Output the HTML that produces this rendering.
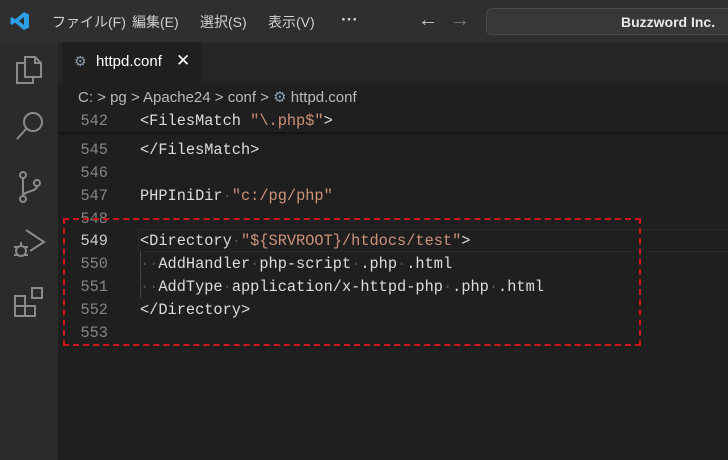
<!DOCTYPE html>
<html><head><meta charset="utf-8"><style>
*{margin:0;padding:0;box-sizing:border-box}
body{width:728px;height:460px;overflow:hidden;background:#1f1f1f;font-family:"Liberation Sans","Noto Sans CJK JP",sans-serif;position:relative}
.title{position:absolute;left:0;top:0;width:728px;height:42px;background:#2f2f2f;color:#d0d0d0;font-size:14px}
.title span{position:absolute;top:12px}
.search{position:absolute;left:486px;top:8px;width:250px;height:27px;border:1px solid #4a4a4a;border-radius:6px;background:#383838;color:#e8e8e8;font-size:14px;font-weight:bold;padding:5px 0 0 134px}
.act{position:absolute;left:0;top:42px;width:58px;height:418px;background:#2b2b2b}
.tabs{position:absolute;left:58px;top:42px;width:670px;height:41px;background:#252525}
.tab{position:absolute;left:62px;top:42px;width:139px;height:41px;background:#1f1f1f;color:#fff;font-size:15px}
.crumb{position:absolute;left:78px;top:88px;color:#bbb;font-size:15px}
.code{position:absolute;left:58px;top:111px;width:670px;font-family:"Liberation Mono",monospace;font-size:15.3px;color:#dcdcdc}
.ln{position:absolute;left:0;width:50px;text-align:right;color:#858585}
.tx{position:absolute;left:82px;white-space:pre}
.s{color:#ce9178}
.d{color:#555}
</style></head><body>
<div class="title">
<svg style="position:absolute;left:10px;top:11px" width="20" height="20" viewBox="0 0 20 20"><path d="M14 1 L19 3.5 V16.5 L14 19 L5 11.5 L2 14 L0.5 13 V7 L2 6 L5 8.5Z M14 6 L9 10 L14 14Z" fill="#2d9fe6" fill-rule="evenodd"/></svg>
<span style="left:52px">ファイル(F)</span><span style="left:132px">編集(E)</span><span style="left:200px">選択(S)</span><span style="left:268px">表示(V)</span><span style="left:341px;top:10px;font-size:17px;font-weight:bold">···</span>
<span style="left:418px;top:9px;font-size:20px;color:#ccc">←</span><span style="left:450px;top:9px;font-size:20px;color:#777">→</span>
<div class="search">Buzzword Inc.</div>
</div>
<div class="act">
<svg style="position:absolute;left:14px;top:12px" width="30" height="32" viewBox="0 0 30 32" fill="none" stroke="#8a8a8a" stroke-width="2"><path d="M11 3h10l6 6v14H11z M21 3v6h6 M11 9H3v20h16v-6"/></svg>
<svg style="position:absolute;left:14px;top:68px" width="32" height="32" viewBox="0 0 32 32" fill="none" stroke="#8a8a8a" stroke-width="2"><circle cx="19" cy="12" r="9"/><path d="M12 19L3 29"/></svg>
<svg style="position:absolute;left:15px;top:128px" width="30" height="34" viewBox="0 0 30 34" fill="none" stroke="#8a8a8a" stroke-width="2"><circle cx="8" cy="5" r="3"/><circle cx="8" cy="29" r="3"/><circle cx="22" cy="13" r="3"/><path d="M8 8v18M22 16c0 6-14 5-14 10"/></svg>
<svg style="position:absolute;left:12px;top:184px" width="34" height="34" viewBox="0 0 34 34" fill="none" stroke="#8a8a8a" stroke-width="2"><path d="M14 4l18 12-14 9"/><circle cx="9" cy="25" r="5"/><path d="M2 21h4M2 29h4M12 21h4M12 29h4M9 19v-3"/></svg>
<svg style="position:absolute;left:13px;top:244px" width="32" height="32" viewBox="0 0 32 32" fill="none" stroke="#8a8a8a" stroke-width="2"><path d="M2 10h10v10H2zM12 20h10v10H12zM2 20h10v10H2z"/><rect x="19" y="2" width="10" height="10"/></svg>
</div>
<div class="tabs"></div>
<div class="tab"><span style="position:absolute;left:12px;top:11px;color:#8aa0b5;font-size:14px">⚙</span><span style="position:absolute;left:34px;top:11px">httpd.conf</span><span style="position:absolute;left:114px;top:9px;font-size:17px">✕</span></div>
<div class="crumb">C: &gt; pg &gt; Apache24 &gt; conf &gt; <span style="color:#8aa0b5">⚙</span> httpd.conf</div>
<div style="position:absolute;left:58px;top:132px;width:670px;height:4px;background:linear-gradient(#111,#1f1f1f)"></div>
<div class="code">
<div class="ln" style="top:1px">542</div><div class="tx" style="top:1px">&lt;FilesMatch <span class="s">"\.php$"</span>&gt;</div>
<div class="ln" style="top:30px">545</div><div class="tx" style="top:30px">&lt;/FilesMatch&gt;</div>
<div class="ln" style="top:53px">546</div>
<div class="ln" style="top:76px">547</div><div class="tx" style="top:76px">PHPIniDir<span class="d">·</span><span class="s">"c:/pg/php"</span></div>
<div class="ln" style="top:99px">548</div>
<div style="position:absolute;left:80px;top:118px;width:600px;height:23px;border:1px solid #2a2a2a"></div>
<div class="ln" style="top:121px;color:#ccc">549</div><div class="tx" style="top:121px">&lt;Directory<span class="d">·</span><span class="s">"${SRVROOT}/htdocs/test"</span>&gt;</div>
<div style="position:absolute;left:82px;top:141px;width:1px;height:46px;background:#444"></div>
<div class="ln" style="top:144px">550</div><div class="tx" style="top:144px"><span class="d">··</span>AddHandler<span class="d">·</span>php-script<span class="d">·</span>.php<span class="d">·</span>.html</div>
<div class="ln" style="top:167px">551</div><div class="tx" style="top:167px"><span class="d">··</span>AddType<span class="d">·</span>application/x-httpd-php<span class="d">·</span>.php<span class="d">·</span>.html</div>
<div class="ln" style="top:190px">552</div><div class="tx" style="top:190px">&lt;/Directory&gt;</div>
<div class="ln" style="top:213px">553</div>
</div>
<div style="position:absolute;left:63px;top:218px;width:578px;height:128px;border:2px dashed #d0161b"></div>
</body></html>
